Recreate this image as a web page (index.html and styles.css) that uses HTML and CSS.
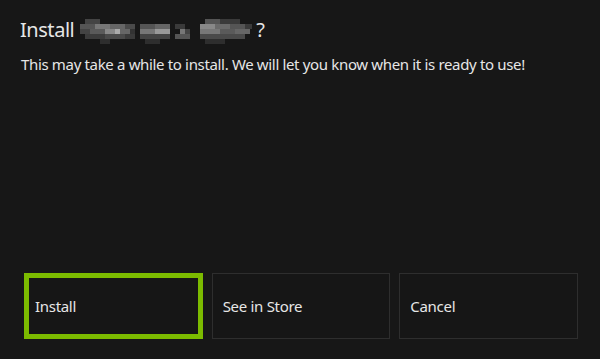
FILE: index.html
```html
<!DOCTYPE html>
<html>
<head>
    <meta charset="UTF-8">
    <meta name="viewport" content="width=device-width, initial-scale=1.0">
    <title>Install</title>
    <link rel="stylesheet" href="styles.css">
</head>
<body>
    <div class="dialog">
        <h1 class="title">
            Install
            <!-- product name is pixelated in the capture -->
            <svg class="mosaic" width="175" height="25" viewBox="0 0 175 25" aria-hidden="true">
                <rect x="5" y="0" width="15" height="5" fill="#444"/>
                <rect x="125" y="0" width="15" height="5" fill="#555"/>
                <rect x="140" y="0" width="20" height="5" fill="#3a3a3a"/>

                <rect x="0" y="5" width="15" height="5" fill="#555"/>
                <rect x="15" y="5" width="15" height="5" fill="#777"/>
                <rect x="30" y="5" width="15" height="5" fill="#666"/>
                <rect x="45" y="5" width="10" height="5" fill="#4a4a4a"/>
                <rect x="60" y="5" width="15" height="5" fill="#555"/>
                <rect x="75" y="5" width="15" height="5" fill="#666"/>
                <rect x="95" y="5" width="10" height="5" fill="#3a3a3a"/>
                <rect x="120" y="5" width="15" height="5" fill="#888"/>
                <rect x="135" y="5" width="15" height="5" fill="#6a6a6a"/>
                <rect x="150" y="5" width="15" height="5" fill="#555"/>
                <rect x="165" y="5" width="7" height="5" fill="#3a3a3a"/>

                <rect x="0" y="10" width="10" height="5" fill="#444"/>
                <rect x="10" y="10" width="15" height="5" fill="#5a5a5a"/>
                <rect x="25" y="10" width="10" height="5" fill="#888"/>
                <rect x="35" y="10" width="5" height="5" fill="#aaa"/>
                <rect x="40" y="10" width="10" height="5" fill="#666"/>
                <rect x="50" y="10" width="5" height="5" fill="#333"/>
                <rect x="60" y="10" width="15" height="5" fill="#777"/>
                <rect x="75" y="10" width="15" height="5" fill="#999"/>
                <rect x="100" y="10" width="5" height="5" fill="#777"/>
                <rect x="105" y="10" width="5" height="5" fill="#444"/>
                <rect x="120" y="10" width="20" height="5" fill="#777"/>
                <rect x="140" y="10" width="15" height="5" fill="#5a5a5a"/>
                <rect x="155" y="10" width="15" height="5" fill="#666"/>

                <rect x="5" y="15" width="20" height="5" fill="#3c3c3c"/>
                <rect x="25" y="15" width="20" height="5" fill="#4a4a4a"/>
                <rect x="45" y="15" width="10" height="5" fill="#3a3a3a"/>
                <rect x="60" y="15" width="30" height="5" fill="#444"/>
                <rect x="95" y="15" width="15" height="5" fill="#555"/>
                <rect x="120" y="15" width="45" height="5" fill="#4a4a4a"/>

                <rect x="20" y="20" width="10" height="5" fill="#2e2e2e"/>
                <rect x="65" y="20" width="15" height="5" fill="#2e2e2e"/>
                <rect x="125" y="20" width="20" height="5" fill="#2e2e2e"/>
            </svg>?
        </h1>
        <p class="message">This may take a while to install. We will let you know when it is ready to use!</p>

        <div class="actions">
            <button class="action focused">Install</button>
            <button class="action">See in Store</button>
            <button class="action">Cancel</button>
        </div>
    </div>
</body>
</html>
```

FILE: styles.css
```css
html, body {
    margin: 0;
    height: 100%;
}
body {
    background-color: #171717;
    color: #e6e6e6;
    font-family: 'Noto Sans', sans-serif;
}
.dialog {
    height: 100%;
    box-sizing: border-box;
    padding: 14px 22px 20px 20px;
    display: flex;
    flex-direction: column;
}
.title {
    margin: 0;
    font-size: 20px;
    letter-spacing: -0.45px;
    font-weight: normal;
    line-height: 32px;
    display: flex;
    align-items: center;
}
.mosaic {
    margin: 2px 1px 0 6px;
}
.message {
    margin: 8px 0 0 1px;
    font-size: 15px;
    letter-spacing: -0.34px;
    line-height: 20px;
}
.actions {
    margin-top: auto;
    padding-left: 4px;
    display: flex;
    gap: 9px;
}
.action {
    width: 179px;
    height: 66px;
    box-sizing: border-box;
    background-color: #161616;
    border: 1px solid #2e2e2e;
    color: #e6e6e6;
    font-family: inherit;
    font-size: 15px;
    letter-spacing: -0.3px;
    text-align: left;
    padding: 0 10px;
    cursor: pointer;
}
.action.focused {
    border: 5px solid #7cbb00;
    padding-left: 6px;
}
```
